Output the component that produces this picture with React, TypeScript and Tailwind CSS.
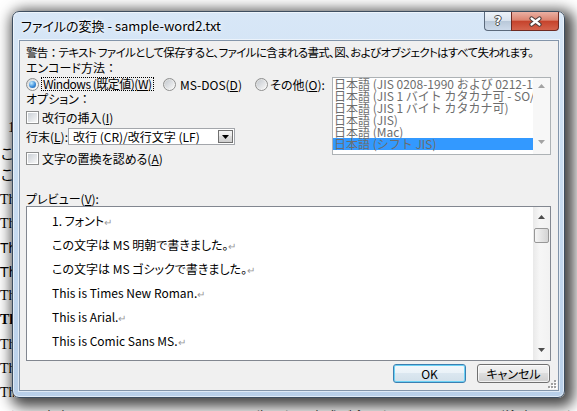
import React from "react";

const JP = "font-['Noto_Sans_CJK_JP',sans-serif] [font-feature-settings:'palt']";

function Radio({ checked }: { checked?: boolean }) {
  return (
    <span className="flex h-[13px] w-[13px] shrink-0 items-center justify-center rounded-full border border-[#8e8f8f] bg-[linear-gradient(135deg,#d6d6d6,#ffffff)]">
      {checked ? (
        <span className="h-[7px] w-[7px] rounded-full bg-[radial-gradient(circle_at_35%_30%,#c9efff_0%,#3d8fdc_55%,#1a5597_100%)]" />
      ) : (
        <span className="h-[9px] w-[9px] rounded-full bg-[linear-gradient(135deg,#c4c9cf,#f7f7f7)]" />
      )}
    </span>
  );
}

function Check() {
  return (
    <span className="flex h-[13px] w-[13px] shrink-0 items-center justify-center border border-[#8e8f8f] bg-white">
      <span className="h-[9px] w-[9px] bg-[linear-gradient(135deg,#cbd0d6,#f7f7f7)]" />
    </span>
  );
}

function Tri({ up, color }: { up?: boolean; color: string }) {
  return (
    <svg width="7" height="4" viewBox="0 0 7 4">
      <path d={up ? "M0 4 L3.5 0 L7 4Z" : "M0 0 L7 0 L3.5 4Z"} fill={color} />
    </svg>
  );
}

function Colon() {
  return <span className="[font-feature-settings:normal]">：</span>;
}

function Ret() {
  return <span className="text-[10px] text-[#9a9a9a]">↵</span>;
}

export default function App() {
  return (
    <div className="relative h-[411px] w-[577px] overflow-hidden bg-white">
      {/* document behind the dialog (only its left edge and bottom line show) */}
      <div className="flex flex-col whitespace-nowrap pt-[120px] font-['Liberation_Serif','Noto_Sans_CJK_JP',serif] text-[14px] leading-[16px] text-black">
        <div className="w-[14px] overflow-hidden">
          <div className="h-[25px] pl-[8px]">1.</div>
          <div className="h-[21px] font-['Noto_Sans_CJK_JP',sans-serif]">この</div>
          <div className="h-[26px] font-['Noto_Sans_CJK_JP',sans-serif]">この</div>
          <div className="h-[24px]">Thi</div>
          <div className="h-[24px]">Thi</div>
          <div className="h-[24px] font-['Liberation_Sans',sans-serif]">Th</div>
          <div className="h-[24px] font-['DejaVu_Sans',sans-serif]">Th</div>
          <div className="h-[24px]">Thi</div>
          <div className="h-[25px] font-bold">This</div>
          <div className="h-[24px]">Thi</div>
          <div className="h-[24px]">Th</div>
          <div className="h-[23px]">Th</div>
        </div>
        <div className="font-['Noto_Sans_CJK_JP',sans-serif]">（この文書には、テキスト ファイルでは失われる書式が含まれていますので、ご注意ください。）</div>
      </div>

      {/* dialog window */}
      <div className="absolute left-[12px] top-[11px] flex h-[387px] w-[553px] flex-col rounded-[7px] border border-[#3e4e60] bg-[linear-gradient(180deg,#d8e7f7_0%,#cde0f3_30%,#c2d7ee_70%,#b9d0ea_100%)] shadow-[4px_4px_14px_5px_rgba(0,0,0,0.72),inset_0_0_0_1px_rgba(255,255,255,0.55)]">
        {/* title bar */}
        <div className="flex h-[28px] shrink-0">
          <div className={`${JP} whitespace-nowrap pl-[8px] pt-[6px] text-[13px] leading-[15px] text-black [text-shadow:0_0_6px_#fff,0_0_3px_#fff]`}>
            ファイルの変換 - sample-word2.txt
          </div>
          <div className="ml-auto mr-[5px] flex h-[19px]">
            <div className="flex w-[27px] items-center justify-center rounded-bl-[4px] border border-r-0 border-t-0 border-[#5b6a7c] bg-[linear-gradient(180deg,#eef3f9_0%,#d9e3ee_48%,#b9c8d9_52%,#cddaea_100%)]">
              <span className="font-['DejaVu_Sans',sans-serif] text-[12px] font-bold leading-none text-white [text-shadow:1px_0_#4a4a4a,-1px_0_#4a4a4a,0_1px_#4a4a4a,0_-1px_#4a4a4a]">
                ?
              </span>
            </div>
            <div className="flex w-[48px] items-center justify-center rounded-br-[4px] border border-t-0 border-[#6e2a22] bg-[linear-gradient(180deg,#eab0a3_0%,#dc8470_45%,#c6432c_52%,#d4634c_100%)]">
              <svg width="15" height="11" viewBox="0 0 15 11">
                <path d="M3.5 2.5 L11.5 8.5 M11.5 2.5 L3.5 8.5" stroke="#4a3a38" strokeWidth="4.2" strokeLinecap="round" />
                <path d="M3.5 2.5 L11.5 8.5 M11.5 2.5 L3.5 8.5" stroke="#ffffff" strokeWidth="2.2" strokeLinecap="round" />
              </svg>
            </div>
          </div>
        </div>

        {/* client area */}
        <div className={`${JP} relative ml-[6px] flex h-[351px] w-[540px] flex-col border border-[#8395aa] bg-[#f0f0f0] pl-[6px] text-[12px] leading-[13px] text-black shadow-[0_0_0_1px_rgba(255,255,255,0.55)]`}>
          <div className="mt-[5px] h-[13px] whitespace-nowrap text-[11.5px] tracking-[-0.65px]">
            警告<Colon />テキスト ファイルとして保存すると、ファイルに含まれる書式、図、およびオブジェクトはすべて失われます。
          </div>
          <div className="mt-[2px] h-[13px] whitespace-nowrap">
            エンコード方法<Colon />
          </div>

          <div className="mt-[2px] flex">
            <div className="flex w-[306px] flex-col whitespace-nowrap">
              <div className="flex h-[16px] items-center">
                <div className="flex w-[137px] items-center">
                  <Radio checked />
                  <span className="ml-[2px] border border-dotted border-black px-[1px] leading-[12px] tracking-[-0.5px]">
                    Windows (既定値)(<u>W</u>)
                  </span>
                </div>
                <div className="flex w-[92px] items-center">
                  <Radio />
                  <span className="ml-[4px]">
                    MS-DOS(<u>D</u>)
                  </span>
                </div>
                <div className="flex items-center">
                  <Radio />
                  <span className="ml-[2px]">
                    その他(<u>O</u>):
                  </span>
                </div>
              </div>
              <div className="h-[13px]">
                オプション<Colon />
              </div>
              <div className="mt-[5px] flex h-[15px] items-center">
                <Check />
                <span className="ml-[3px]">
                  改行の挿入(<u>I</u>)
                </span>
              </div>
              <div className="mt-[3px] flex h-[17px] items-center">
                <span className="w-[42px]">
                  行末(<u>L</u>):
                </span>
                <div className="flex h-[17px] w-[167px] items-center border border-[#a3a6ab] bg-white">
                  <span className="flex-1 pl-[4px]">改行 (CR)/改行文字 (LF)</span>
                  <span className="mr-[1px] flex h-[13px] w-[15px] items-center justify-center border border-[#707070] bg-[linear-gradient(180deg,#f4f4f4_0%,#ebebeb_45%,#dddddd_50%,#cfcfcf_100%)]">
                    <Tri color="#000" />
                  </span>
                </div>
              </div>
              <div className="mt-[6px] flex h-[15px] items-center">
                <Check />
                <span className="ml-[3px]">
                  文字の置換を認める(<u>A</u>)
                </span>
              </div>
            </div>

            {/* encoding listbox (disabled) */}
            <div className="mt-[1px] flex h-[78px] w-[219px] border border-[#adb2b5] bg-white">
              <div className="flex w-[200px] flex-col overflow-hidden whitespace-nowrap text-[#6d6d6d] [font-feature-settings:normal]">
                <div className="h-[12px] pl-[1px] leading-[12px]">日本語 (JIS 0208-1990 および 0212-1990)</div>
                <div className="h-[12px] pl-[1px] leading-[12px]">日本語 (JIS 1 バイト カタカナ可 - SO/SI)</div>
                <div className="h-[12px] pl-[1px] leading-[12px]">日本語 (JIS 1 バイト カタカナ可)</div>
                <div className="h-[12px] pl-[1px] leading-[12px]">日本語 (JIS)</div>
                <div className="h-[12px] pl-[1px] leading-[12px]">日本語 (Mac)</div>
                <div className="h-[12px] bg-[#3399ff] pl-[1px] leading-[12px]">日本語 (シフト JIS)</div>
              </div>
              <div className="flex flex-1 flex-col bg-[#f7f7f7]">
                <div className="flex h-[15px] items-center justify-center">
                  <Tri up color="#a3a3a3" />
                </div>
                <div className="flex-1" />
                <div className="mb-[5px] flex h-[15px] items-center justify-center">
                  <Tri color="#a3a3a3" />
                </div>
              </div>
            </div>
          </div>

          <div className="mt-[26px] h-[13px] whitespace-nowrap">
            プレビュー(<u>V</u>):
          </div>

          {/* preview box */}
          <div className="mt-[1px] flex h-[155px] w-[525px] border border-[#828790] bg-white">
            <div className="flex flex-1 flex-col whitespace-nowrap pl-[25px] pt-[2px]">
              <div className="h-[24px] leading-[24px]">
                1. フォント<Ret />
              </div>
              <div className="h-[24px] leading-[24px]">
                この文字は MS 明朝で書きました。<Ret />
              </div>
              <div className="h-[24px] leading-[24px]">
                この文字は MS ゴシックで書きました。<Ret />
              </div>
              <div className="h-[24px] leading-[24px]">
                This is Times New Roman.<Ret />
              </div>
              <div className="h-[24px] leading-[24px]">
                This is Arial.<Ret />
              </div>
              <div className="h-[24px] leading-[24px]">
                This is Comic Sans MS.<Ret />
              </div>
            </div>
            <div className="flex w-[17px] flex-col bg-[linear-gradient(90deg,#e9e9e9,#f6f6f6_40%,#f2f2f2)]">
              <div className="flex h-[20px] items-center justify-center">
                <Tri up color="#4d4d4d" />
              </div>
              <div className="mx-[1px] mt-[1px] h-[15px] rounded-[2px] border border-[#979797] bg-[linear-gradient(90deg,#f5f5f5,#e4e4e4_50%,#d4d4d4)]" />
              <div className="flex-1" />
              <div className="flex h-[20px] items-center justify-center">
                <Tri color="#4d4d4d" />
              </div>
            </div>
          </div>

          {/* buttons */}
          <div className="mt-[3px] flex h-[19px] justify-end gap-[11px] pr-[8px]">
            <div className="flex w-[73px] items-center justify-center rounded-[3px] border border-[#3c7fb1] bg-[linear-gradient(180deg,#f3f8fb_0%,#eaf2f8_45%,#dbe7f0_50%,#d2e0ea_100%)] shadow-[inset_0_0_0_1px_#6cd2f5]">
              OK
            </div>
            <div className="flex w-[73px] items-center justify-center rounded-[3px] border border-[#707070] bg-[linear-gradient(180deg,#f2f2f2_0%,#ebebeb_45%,#dddddd_50%,#cfcfcf_100%)] shadow-[inset_0_0_0_1px_rgba(255,255,255,0.7)]">
              キャンセル
            </div>
          </div>

          {/* resize grip */}
          <svg className="absolute bottom-[1px] right-[1px]" width="10" height="10" viewBox="0 0 10 10">
            <g fill="#ffffff">
              <rect x="8" y="2" width="2" height="2" />
              <rect x="8" y="5" width="2" height="2" />
              <rect x="5" y="5" width="2" height="2" />
              <rect x="8" y="8" width="2" height="2" />
              <rect x="5" y="8" width="2" height="2" />
              <rect x="2" y="8" width="2" height="2" />
            </g>
            <g fill="#a0a0a0">
              <rect x="7" y="1" width="2" height="2" />
              <rect x="7" y="4" width="2" height="2" />
              <rect x="4" y="4" width="2" height="2" />
              <rect x="7" y="7" width="2" height="2" />
              <rect x="4" y="7" width="2" height="2" />
              <rect x="1" y="7" width="2" height="2" />
            </g>
          </svg>
        </div>
      </div>
    </div>
  );
}
